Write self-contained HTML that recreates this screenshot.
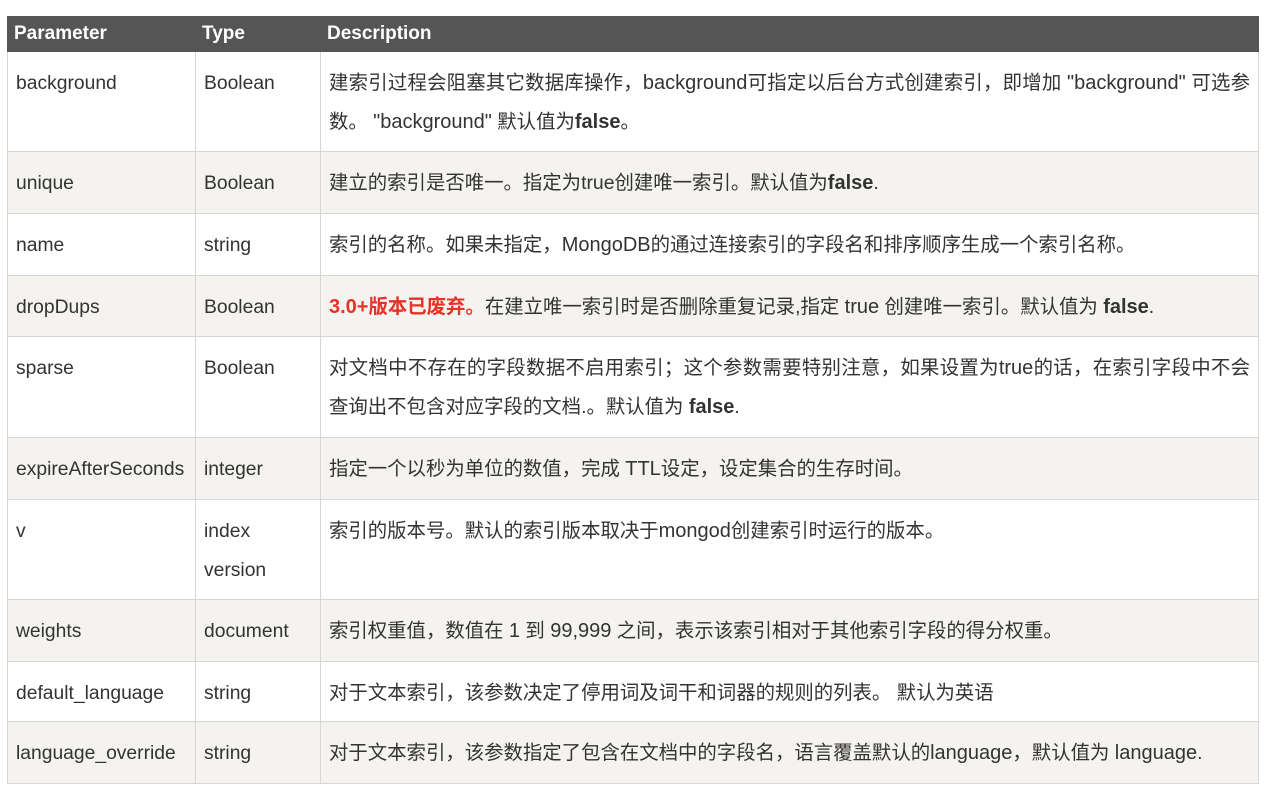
<!DOCTYPE html>
<html><head><meta charset="utf-8"><style>
body{margin:0;width:1268px;height:800px;background:#fff;overflow:hidden;font-family:"Liberation Sans","Noto Sans CJK SC",sans-serif;color:#333;font-size:19.4px;position:relative}
table{position:absolute;left:7px;top:16px;width:1252px;border-collapse:collapse;table-layout:fixed}
th{background:#555;color:#fff;text-align:left;font-weight:bold;height:34px;padding:0 0 0 6px;font-size:19px;border:1px solid #555}
td{border:1px solid #d6d6d6;vertical-align:top;padding:12px 8px 0 8px;line-height:39px;box-sizing:border-box;text-align:justify}
td.c{font-size:19.3px;text-align:left;padding-right:0}
tr.g td{background:#f4f3f0}
.r{color:#e5332a;font-weight:bold}
.l{font-size:20px}
</style></head><body>
<table>
<colgroup><col style="width:188px"><col style="width:125px"><col></colgroup>
<tr><th>Parameter</th><th>Type</th><th>Description</th></tr>
<tr style="height:100px"><td class="c">background</td><td class="c">Boolean</td><td>建索引过程会阻塞其它数据库操作，<span class="l">background</span>可指定以后台方式创建索引，即增加 <span class="l">"background"</span> 可选参数。 <span class="l">"background"</span> 默认值为<b class="l">false</b>。</td></tr>
<tr class="g" style="height:62px"><td class="c">unique</td><td class="c">Boolean</td><td>建立的索引是否唯一。指定为true创建唯一索引。默认值为<b class="l">false</b>.</td></tr>
<tr style="height:62px"><td class="c">name</td><td class="c">string</td><td>索引的名称。如果未指定，<span class="l">MongoDB</span>的通过连接索引的字段名和排序顺序生成一个索引名称。</td></tr>
<tr class="g" style="height:61px"><td class="c">dropDups</td><td class="c">Boolean</td><td><span class="r"><span class="l">3.0+</span>版本已废弃。</span>在建立唯一索引时是否删除重复记录,指定 <span class="l">true</span> 创建唯一索引。默认值为 <b class="l">false</b>.</td></tr>
<tr style="height:101px"><td class="c">sparse</td><td class="c">Boolean</td><td>对文档中不存在的字段数据不启用索引；这个参数需要特别注意，如果设置为<span class="l">true</span>的话，在索引字段中不会查询出不包含对应字段的文档.。默认值为 <b class="l">false</b>.</td></tr>
<tr class="g" style="height:62px"><td class="c">expireAfterSeconds</td><td class="c">integer</td><td>指定一个以秒为单位的数值，完成 <span class="l">TTL</span>设定，设定集合的生存时间。</td></tr>
<tr style="height:100px"><td class="c">v</td><td class="c">index<br>version</td><td>索引的版本号。默认的索引版本取决于<span class="l">mongod</span>创建索引时运行的版本。</td></tr>
<tr class="g" style="height:62px"><td class="c">weights</td><td class="c">document</td><td>索引权重值，数值在 <span class="l">1</span> 到 <span class="l">99,999</span> 之间，表示该索引相对于其他索引字段的得分权重。</td></tr>
<tr style="height:60px"><td class="c">default_language</td><td class="c">string</td><td>对于文本索引，该参数决定了停用词及词干和词器的规则的列表。 默认为英语</td></tr>
<tr class="g" style="height:62px"><td class="c">language_override</td><td class="c">string</td><td>对于文本索引，该参数指定了包含在文档中的字段名，语言覆盖默认的<span class="l">language</span>，默认值为 <span class="l">language</span>.</td></tr>
</table>
</body></html>
